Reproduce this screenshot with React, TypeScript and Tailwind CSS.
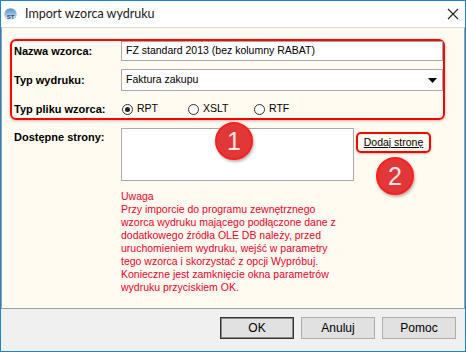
import React from 'react';

const Radio = ({ label, checked }: { label: string; checked?: boolean }) => (
  <div className="w-[66px] flex items-center gap-[4px] pl-[1px]">
    <span className="w-[11px] h-[11px] rounded-full border border-[#333333] bg-white flex items-center justify-center">
      {checked && <span className="w-[5px] h-[5px] rounded-full bg-[#222222]" />}
    </span>
    <span>{label}</span>
  </div>
);

const Badge = ({ n, className }: { n: string; className: string }) => (
  <div
    className={`absolute w-[38px] h-[38px] rounded-full bg-[#e03838] border-2 border-[#ff1e1e] shadow-[1px_2px_3px_rgba(0,0,0,0.3)] flex items-center justify-center text-[25px] leading-none text-[#fde2e2] ${className}`}
  >
    {n}
  </div>
);

const Button = ({ label, isDefault }: { label: string; isDefault?: boolean }) => (
  <button
    className={`w-[74px] h-[22px] bg-[#e1e1e1] text-[12px] text-black flex items-center justify-center ${
      isDefault ? 'border border-[#333333] shadow-[inset_0_0_0_1px_#8a8a8a]' : 'border border-[#adadad]'
    }`}
  >
    {label}
  </button>
);

export default function App() {
  return (
    <div className="relative w-[466px] h-[352px] flex flex-col border border-[#1883d7] bg-[#f0f0f0] overflow-hidden font-['Liberation_Sans',Arial,sans-serif] text-[10.5px] text-black">
      {/* title bar */}
      <div className="h-[26px] bg-white flex items-center pl-[3px] pr-[6px]">
        <svg width="13" height="13" viewBox="0 0 13 13">
          <defs>
            <linearGradient id="lg" x1="0" y1="0" x2="0" y2="1">
              <stop offset="0" stopColor="#4f8fc9" />
              <stop offset="0.55" stopColor="#a9c4dc" />
              <stop offset="1" stopColor="#f2f5f8" />
            </linearGradient>
          </defs>
          <circle cx="6.5" cy="6.5" r="6.2" fill="url(#lg)" />
          <text x="6.5" y="11" textAnchor="middle" fontSize="6" fontWeight="bold" fill="#1c4f86" fontFamily="Liberation Sans, sans-serif">
            ST
          </text>
        </svg>
        <span className="ml-[8px] text-[12.5px] font-['Lato',sans-serif] text-[#1a1a1a]">Import wzorca wydruku</span>
        <svg className="ml-auto" width="12" height="12" viewBox="0 0 12 12">
          <path d="M1 1 L11 11 M11 1 L1 11" stroke="#222" strokeWidth="1.1" />
        </svg>
      </div>

      {/* content */}
      <div className="h-[282px] bg-[#fffbf0] border border-t-[#d9d9d9] border-x-[#a0a0a0] border-b-[#a0a0a0] pt-[11px] pl-[8px]">
        <div className="w-[435px] border-2 border-[#ff0000] rounded-[6px] shadow-[0_1px_3px_rgba(0,0,0,0.25)]">
          <div className="grid grid-cols-[109px_1fr]">
            <div className="pl-[2px] h-[20px] flex items-center font-bold text-[11px]">Nazwa wzorca:</div>
            <div className="h-[20px] bg-white border border-[#a9a9a9] flex items-center pl-[4px]">
              FZ standard 2013 (bez kolumny RABAT)
            </div>
          </div>
          <div className="grid grid-cols-[109px_1fr] mt-[8px]">
            <div className="pl-[2px] h-[22px] flex items-center font-bold text-[11px]">Typ wydruku:</div>
            <div className="h-[22px] bg-white border border-[#a9a9a9] flex items-center pl-[4px] pr-[5px]">
              <span>Faktura zakupu</span>
              <svg className="ml-auto" width="9" height="5" viewBox="0 0 9 5">
                <path d="M0 0 H9 L4.5 5 Z" fill="#000" />
              </svg>
            </div>
          </div>
          <div className="grid grid-cols-[109px_1fr] mt-[9px] h-[18px]">
            <div className="pl-[2px] flex items-center font-bold text-[11px]">Typ pliku wzorca:</div>
            <div className="flex items-center">
              <Radio label="RPT" checked />
              <Radio label="XSLT" />
              <Radio label="RTF" />
            </div>
          </div>
        </div>

        <div className="grid grid-cols-[111px_233px_auto] mt-[8px]">
          <div className="pl-[4px] pt-[1px] font-bold text-[11px]">Dostępne strony:</div>
          <div className="h-[53px] bg-white border border-[#a9a9a9]" />
          <div className="ml-[2px] mt-[4px] w-[75px] h-[21px] border-2 border-[#ff0000] rounded-[5px] shadow-[0_1px_2px_rgba(0,0,0,0.25)] flex items-center justify-center underline">
            Dodaj stronę
          </div>
        </div>

        <div className="ml-[111px] mt-[9px] leading-[13px] text-[#f2002b]">
          Uwaga
          <br />
          Przy imporcie do programu zewnętrznego
          <br />
          wzorca wydruku mającego podłączone dane z
          <br />
          dodatkowego źródła OLE DB należy, przed
          <br />
          uruchomieniem wydruku, wejść w parametry
          <br />
          tego wzorca i skorzystać z opcji Wypróbuj.
          <br />
          Konieczne jest zamknięcie okna parametrów
          <br />
          wydruku przyciskiem OK.
        </div>
      </div>

      {/* buttons */}
      <div className="flex-1 flex justify-end items-start gap-[7px] pt-[8px] pr-[9px]">
        <Button label="OK" isDefault />
        <Button label="Anuluj" />
        <Button label="Pomoc" />
      </div>

      <Badge n="1" className="left-[214px] top-[121px]" />
      <Badge n="2" className="left-[375px] top-[156px]" />
    </div>
  );
}
